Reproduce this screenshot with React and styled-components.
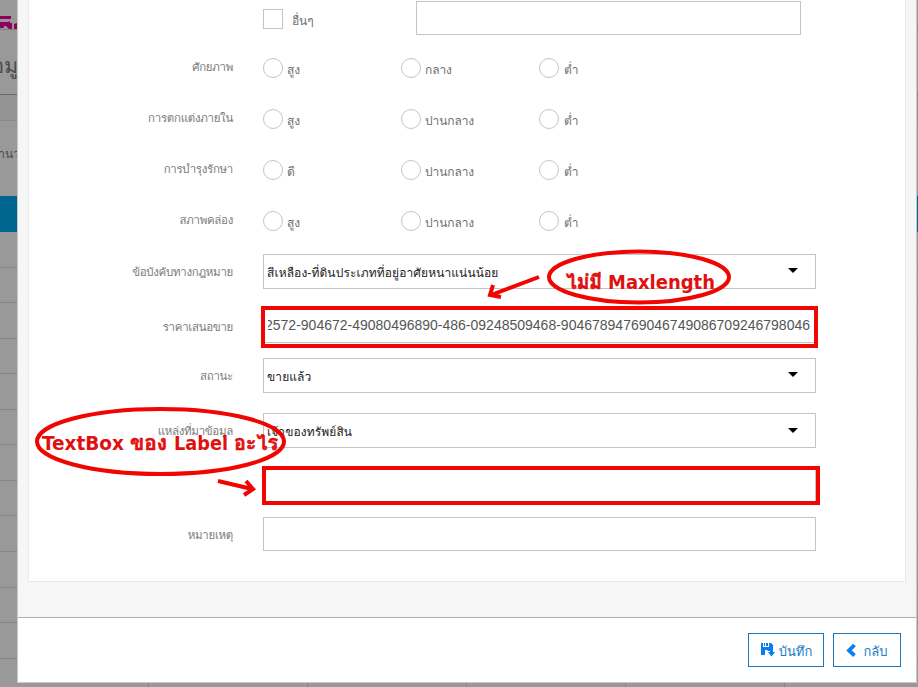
import React from "react";
import styled, { createGlobalStyle } from "styled-components";

const GlobalStyle = createGlobalStyle`
  * { box-sizing: border-box; }
  body { margin: 0; background: #999; overflow: hidden; }
  #root { font-family: "Liberation Sans", "Loma", "Waree", "Garuda", "Noto Sans Thai Looped", "Noto Sans Thai", sans-serif; }
`;

const Screen = styled.div`
  position: relative;
  width: 918px;
  height: 687px;
  overflow: hidden;
  background: #999;
`;

const Backdrop = styled.div`
  height: 687px;
  display: flex;
  flex-direction: column;
  color: #4c4c4c;
`;

const Band = styled.div`
  flex: none;
  height: ${(p) => p.$h}px;
  background: ${(p) => p.$bg || "transparent"};
  border-bottom: ${(p) => (p.$line ? `1px solid ${p.$line}` : "0")};
  font-size: ${(p) => p.$size || 12}px;
  line-height: ${(p) => p.$lh || p.$h}px;
  white-space: nowrap;
  overflow: hidden;
`;

const BandText = styled.span`
  display: flex;
  justify-content: flex-end;
  width: ${(p) => p.$w}px;
  overflow: hidden;
`;

const LastBand = styled.div`
  flex: 1;
  display: grid;
  grid-template-columns: 149px repeat(4, 159px) 1fr;
`;

const Cell = styled.div`
  border-right: 1px solid #858585;
`;

const Modal = styled.div`
  position: absolute;
  left: 17px;
  top: 0;
  width: 900px;
  height: 683px;
  display: flex;
  flex-direction: column;
  background: #f6f6f6;
  border: solid #c8c8c8;
  border-width: 0 1px 1px;
`;

const Card = styled.div`
  height: 582px;
  margin: 0 10px;
  background: #fff;
  border: 1px solid #e9e9e9;
  border-top: 0;
`;

const Footer = styled.div`
  margin-top: 35px;
  flex: 1;
  display: flex;
  justify-content: flex-end;
  gap: 9px;
  padding: 15px 15px 0 0;
  background: #fff;
  border-top: 1px solid #b0b0b0;
`;

const Button = styled.button`
  width: ${(p) => p.$w}px;
  height: 34px;
  padding: 0;
  display: flex;
  align-items: center;
  justify-content: center;
  gap: ${(p) => p.$gap}px;
  font: 13px "Liberation Sans", "Loma", "Waree", sans-serif;
  color: #1a7cc4;
  background: #fff;
  border: 1px solid #1b78b8;
`;

const ButtonText = styled.span`
  padding-top: 2px;
`;

const FormRow = styled.div`
  display: grid;
  grid-template-columns: 204px 553px;
  column-gap: 30px;
  height: ${(p) => p.$h}px;
  margin-top: ${(p) => p.$gap || 0}px;
`;

const Label = styled.div`
  padding-top: 2px;
  text-align: right;
  font-size: 11.5px;
  color: #7c7c7c;
  white-space: nowrap;
  line-height: ${(p) => p.$lh}px;
  letter-spacing: -0.3px;
`;

const OtherRow = styled.div`
  display: flex;
  align-items: flex-start;
  padding-top: 1px;
`;

const Check = styled.span`
  flex: none;
  width: 20px;
  height: 20px;
  margin-top: 8px;
  background: #fff;
  border: 1px solid #c4c4c4;
`;

const OptionText = styled.span`
  font-size: 12px;
  color: #707070;
  line-height: 20px;
  margin: ${(p) => p.$m};
  letter-spacing: -0.1px;
  white-space: nowrap;
`;

const OtherInput = styled.div`
  width: 385px;
  height: 34px;
  margin-left: auto;
  margin-right: 15px;
  border: 1px solid #c4c4c4;
`;

const Options = styled.div`
  display: grid;
  grid-template-columns: repeat(3, 138px);
  padding-top: 15px;
`;

const Option = styled.div`
  display: flex;
  align-items: flex-start;
`;

const Radio = styled.span`
  flex: none;
  width: 20px;
  height: 20px;
  border: 1px solid #c4c4c4;
  border-radius: 50%;
`;

const Field = styled.div`
  display: flex;
  align-items: center;
  justify-content: space-between;
  padding: 0 17px 0 4px;
  border: 1px solid #c4c4c4;
  font-size: 12px;
  color: #222;
  white-space: nowrap;
`;

const FieldText = styled.span`
  margin-left: -1px;
  padding-top: 2px;
  letter-spacing: 0.1px;
`;

const PriceField = styled(Field)`
  padding: 0 5px 2px 4px;
  font-size: 14px;
  color: #555;
`;

const PriceText = styled.span`
  display: flex;
  justify-content: flex-end;
  width: 100%;
  overflow: hidden;
`;

const Caret = styled.span`
  width: 0;
  height: 0;
  margin-top: ${(p) => p.$shift}px;
  border: solid transparent;
  border-width: 5px 5px 0;
  border-top-color: #000;
`;

const Marks = styled.svg`
  position: absolute;
  inset: 0;
  font-family: "DejaVu Sans Condensed", "DejaVu Sans", "Loma", "Waree", "Noto Sans Thai", sans-serif;
  font-weight: bold;
  font-size: 20px;
`;

const radioRows = [
  ["ศักยภาพ", ["สูง", "กลาง", "ต่ำ"]],
  ["การตกแต่งภายใน", ["สูง", "ปานกลาง", "ต่ำ"]],
  ["การบำรุงรักษา", ["ดี", "ปานกลาง", "ต่ำ"]],
  ["สภาพคล่อง", ["สูง", "ปานกลาง", "ต่ำ"]],
];

const tableRows = [36, 35, 36, 35, 36, 35, 36, 35, 36, 36, 35, 36];

function SelectRow({ gap, label, value, caretShift = -2 }) {
  return (
    <FormRow $h={35} $gap={gap}>
      <Label $lh={33}>{label}</Label>
      <Field>
        <FieldText>{value}</FieldText>
        <Caret $shift={caretShift} />
      </Field>
    </FormRow>
  );
}

export default function App() {
  return (
    <Screen>
      <GlobalStyle />
      <Backdrop>
        <Band $h={30} $line="#808080">
          <svg width="17" height="29" fill="#8f0060">
            <path d="M0 16h11v3H0zM0 22h8l2-1v2h2v6H9l-3-3H4v2H0zM14 24l3-1v6h-3z" />
          </svg>
        </Band>
        <Band $h={65} $line="#686868" $size={21} $lh={72}><BandText $w={18}>ข้อมู</BandText></Band>
        <Band $h={26} $bg="#949494" $line="#8a8a8a" />
        <Band $h={75} $lh={66} $size={12}><BandText $w={20}>จำนว</BandText></Band>
        <Band $h={36} $bg="#00668f" />
        {tableRows.map((h, i) => <Band key={i} $h={h} $line="#858585" />)}
        <LastBand>{[1, 2, 3, 4, 5].map((n) => <Cell key={n} />)}</LastBand>
      </Backdrop>
      <Modal>
        <Card>
          <FormRow $h={43}>
            <span />
            <OtherRow>
              <Check />
              <OptionText $m="10px 0 0 9px">อื่นๆ</OptionText>
              <OtherInput />
            </OtherRow>
          </FormRow>
          {radioRows.map(([label, opts]) => (
            <FormRow key={label} $h={51}>
              <Label $lh={45}>{label}</Label>
              <Options>
                {opts.map((o) => (
                  <Option key={o}>
                    <Radio />
                    <OptionText $m={o === "ต่ำ" ? "2px 0 0 5px" : "2px 0 0 4px"}>{o}</OptionText>
                  </Option>
                ))}
              </Options>
            </FormRow>
          ))}
          <SelectRow gap={7} label="ข้อบังคับทางกฎหมาย" value="สีเหลือง-ที่ดินประเภทที่อยู่อาศัยหนาแน่นน้อย" />
          <FormRow $h={34} $gap={20}>
            <Label $lh={32}>ราคาเสนอขาย</Label>
            <PriceField>
              <PriceText>2572-904672-49080496890-486-09248509468-90467894769046749086709246798046</PriceText>
            </PriceField>
          </FormRow>
          <SelectRow gap={15} label="สถานะ" value="ขายแล้ว" />
          <SelectRow gap={20} label="แหล่งที่มาข้อมูล" value="เจ้าของทรัพย์สิน" caretShift={0} />
          <FormRow $h={34} $gap={21}>
            <span />
            <Field />
          </FormRow>
          <FormRow $h={34} $gap={14}>
            <Label $lh={32}>หมายเหตุ</Label>
            <Field />
          </FormRow>
        </Card>
        <Footer>
          <Button $w={76} $gap={4}>
            <svg width="15" height="16" fill="#0a7df0">
              <path d="M1 1h2v4h6V1h2l2 2v4h-3v2H8l-1-1H5v5H1zM4 1h1v3H4zM6 1h2v3H6zM10 7h3v3h2l-3.500 4.500L8 10h2z" />
            </svg>
            <ButtonText>บันทึก</ButtonText>
          </Button>
          <Button $w={68} $gap={7}>
            <svg width="10" height="14" fill="none" stroke="#0a7df0" strokeWidth="3.800">
              <path d="M8.500 2L3 7.500l5.500 5" />
            </svg>
            <ButtonText>กลับ</ButtonText>
          </Button>
        </Footer>
      </Modal>
      <Marks width="918" height="687" viewBox="0 0 918 687">
        <g fill="none" stroke="#f00500" strokeWidth="4">
          <rect x="263" y="308" width="553" height="38" />
          <rect x="264" y="468" width="554" height="35" />
          <ellipse cx="639" cy="277" rx="90" ry="25.500" />
          <ellipse cx="160.500" cy="441.500" rx="123.500" ry="32.500" />
          <path d="M539 277L491 295M493 285L490 295L501 297M218 481L252 489M246 481L253 489L244 495" />
        </g>
        <g fill="#e01010">
          <text x="608" y="289" textLength="107" lengthAdjust="spacingAndGlyphs">Maxlength</text>
          <text x="42" y="450" textLength="82" lengthAdjust="spacingAndGlyphs">TextBox</text>
          <text x="174" y="450" textLength="54" lengthAdjust="spacingAndGlyphs">Label</text>
        </g>
        <g fill="#e01010" stroke="#e01010" strokeWidth="0.6">
          <text x="566" y="289" textLength="36" lengthAdjust="spacingAndGlyphs">ไม่มี</text>
          <text x="130" y="450" textLength="37" lengthAdjust="spacingAndGlyphs">ของ</text>
          <text x="234" y="450" textLength="44" lengthAdjust="spacingAndGlyphs">อะไร</text>
        </g>
      </Marks>
    </Screen>
  );
}
